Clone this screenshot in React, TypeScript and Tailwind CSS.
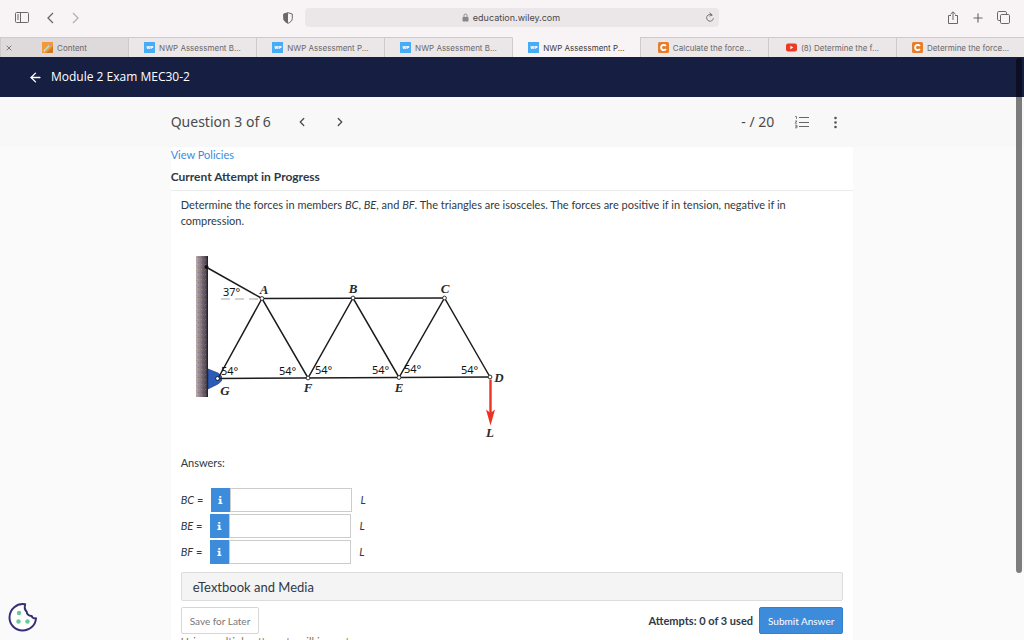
import { useState } from "react";
import type { ReactNode } from "react";
import { ArrowLeft, ChevronLeft, ChevronRight, Plus, X } from "lucide-react";

type TabIcon = "pencil" | "wp" | "youtube" | "chegg";

interface BrowserTab {
  id: number;
  title: string;
  icon: TabIcon;
  active?: boolean;
  hovered?: boolean;
}

const TABS: BrowserTab[] = [
  { id: 1, title: "Content", icon: "pencil", hovered: true },
  { id: 2, title: "NWP Assessment B...", icon: "wp" },
  { id: 3, title: "NWP Assessment P...", icon: "wp" },
  { id: 4, title: "NWP Assessment B...", icon: "wp" },
  { id: 5, title: "NWP Assessment P...", icon: "wp", active: true },
  { id: 6, title: "Calculate the force...", icon: "chegg" },
  { id: 7, title: "(8) Determine the f...", icon: "youtube" },
  { id: 8, title: "Determine the force...", icon: "chegg" },
];

const MEMBERS = ["BC", "BE", "BF"];

function Favicon({ icon }: { icon: TabIcon }) {
  switch (icon) {
    case "pencil":
      return (
        <svg width="11" height="11" viewBox="0 0 11 11" className="shrink-0">
          <rect width="11" height="11" fill="#ef9a3c" />
          <path d="M4 11 11 4v7z" fill="#cf7a22" />
          <path d="M3 8 7.4 3.4" stroke="#9be6e0" strokeWidth="1.8" />
          <path d="M7.4 3.4 8.8 2" stroke="#e583b4" strokeWidth="1.8" />
          <path d="M1.6 9.4 3.4 9 2 7.6z" fill="#fff" />
        </svg>
      );
    case "wp":
      return (
        <span className="flex h-[11px] w-[11px] shrink-0 items-center justify-center bg-[#48abf3] text-[4px] leading-none font-black text-white">
          WP
        </span>
      );
    case "youtube":
      return (
        <svg width="11" height="11" viewBox="0 0 11 11" className="shrink-0">
          <rect y="1.5" width="11" height="8" rx="2" fill="#ee3a24" />
          <path d="M4.3 3.8v3.4l3-1.7z" fill="#fff" />
        </svg>
      );
    case "chegg":
      return (
        <svg width="11" height="11" viewBox="0 0 11 11" className="shrink-0">
          <rect width="11" height="11" rx="1.5" fill="#e57f2d" />
          <path d="M7.9 4.1A2.6 2.6 0 1 0 7.9 6.9" fill="none" stroke="#fff" strokeWidth="1.9" />
        </svg>
      );
  }
}

function ToolButton({ label, children }: { label: string; children: ReactNode }) {
  return (
    <button type="button" aria-label={label} className="flex items-center justify-center">
      {children}
    </button>
  );
}

function BrowserToolbar() {
  return (
    <div className="flex h-[37px] items-center bg-[#f8f4f5] px-3.5 pb-0.5 text-[#6b6768]">
      <div className="flex flex-1 items-center">
        <ToolButton label="Show sidebar">
          <svg width="16" height="12" viewBox="0 0 16 12" fill="none" stroke="currentColor">
            <rect x="1.5" y="0.5" width="13" height="10" rx="1" />
            <path d="M6.5 .5v10M3 3h2M3 5h2M3 7h2" />
          </svg>
        </ToolButton>
        <div className="ml-3 flex items-center gap-1">
          <ToolButton label="Back">
            <svg width="20" height="14" viewBox="0 0 20 14" fill="none" stroke="currentColor" strokeWidth="1.3">
              <path d="M11 2 6 7l5 5" />
            </svg>
          </ToolButton>
          <ToolButton label="Forward">
            <svg width="20" height="14" viewBox="0 0 20 14" fill="none" stroke="#b3afb0" strokeWidth="1.3">
              <path d="M7 2l5 5-5 5" />
            </svg>
          </ToolButton>
        </div>
        <div className="mr-3 ml-auto">
          <ToolButton label="Privacy report">
            <svg width="10" height="12" viewBox="0 0 10 12">
              <path
                d="M5 .7 9.3 2v4.5c0 2.3-1.8 3.7-4.3 4.8C2.5 10.2 .7 8.8 .7 6.500V2z"
                fill="none"
                stroke="currentColor"
              />
              <path d="M5 .7v10.6C2.5 10.2 .7 8.8 .7 6.500V2z" fill="currentColor" />
            </svg>
          </ToolButton>
        </div>
      </div>

      <div className="flex h-[19px] w-[41.5%] items-center justify-center rounded bg-[#ebe7e8] pr-1">
        <div className="flex flex-1 items-center justify-center gap-1 pl-3">
          <svg width="7" height="9" viewBox="0 0 7 9">
            <rect x="0.5" y="4" width="6" height="4.5" rx="0.8" fill="#8b8788" />
            <path d="M2 4V2.5a1.5 1.5 0 0 1 3 0V4" fill="none" stroke="#8b8788" />
          </svg>
          <span className="text-[9px] leading-3 text-[#4a4748]">education.wiley.com</span>
        </div>
        <ToolButton label="Reload">
          <svg width="10" height="11" viewBox="0 0 10 11" fill="none" stroke="currentColor" strokeWidth="0.9">
            <path d="M7.2 3.2A3.4 3.4 0 1 0 8.4 6.2M4.6 .6l2.6 2.5-2.8 1" />
          </svg>
        </ToolButton>
      </div>

      <div className="flex flex-1 items-center justify-end gap-3">
        <ToolButton label="Share">
          <svg width="12" height="14" viewBox="0 0 12 14" fill="none" stroke="currentColor">
            <path d="M4 4.500H1.500v8h9v-8H8M6 9V1M3.500 3.200 6 .8l2.500 2.400" />
          </svg>
        </ToolButton>
        <ToolButton label="New tab">
          <Plus size={14} strokeWidth={2} />
        </ToolButton>
        <ToolButton label="Show all tabs">
          <svg width="13" height="13" viewBox="0 0 13 13" fill="none" stroke="currentColor">
            <rect x="3.5" y="3.5" width="9" height="9" rx="1.2" />
            <path d="M3.5 9.500h-1.700a1.300 1.300 0 0 1-1.300-1.300V1.800A1.300 1.300 0 0 1 1.800 .5h6.400a1.300 1.300 0 0 1 1.300 1.300v1.700" />
          </svg>
        </ToolButton>
      </div>
    </div>
  );
}

function TabBar() {
  return (
    <div className="flex h-5 bg-[#ebe7e8]">
      {TABS.map((tab) => (
        <button
          key={tab.id}
          type="button"
          className={`relative flex min-w-0 flex-1 items-center justify-center gap-1 border-t border-l text-[8px] leading-3 ${
            tab.active
              ? "border-t-[#f8f4f5] border-l-[#cfcbcc] bg-[#f8f4f5] text-[#3b3839]"
              : "border-t-[#cfcbcc] border-l-[#cfcbcc] text-[#6a6667]"
          } ${tab.hovered ? "bg-[#dedadb]" : ""}`}
        >
          {tab.hovered && <X size={8} strokeWidth={2.5} className="absolute left-1" />}
          <Favicon icon={tab.icon} />
          <span className="whitespace-nowrap">{tab.title}</span>
        </button>
      ))}
    </div>
  );
}

function QuestionBar() {
  return (
    <div className="bg-[#f8f8f8] font-['Noto_Sans','Open_Sans',sans-serif]">
      <div className="mx-auto flex h-[50px] w-2/3 items-center text-[#4b4b4b]">
        <h2 className="text-[14px] leading-5">Question 3 of 6</h2>
        <div className="ml-6 flex gap-6">
          <button type="button" aria-label="Previous question">
            <ChevronLeft size={14} strokeWidth={2.2} />
          </button>
          <button type="button" aria-label="Next question">
            <ChevronRight size={14} strokeWidth={2.2} />
          </button>
        </div>
        <span className="ml-auto text-[14px] leading-5">- / 20</span>
        <button type="button" aria-label="Question list" className="ml-5">
          <svg width="16" height="14" viewBox="0 0 16 14" fill="none" stroke="#666">
            <path d="M5 2.500h10M5 7.500h10M5 11.500h10" strokeWidth="1.2" />
            <path d="M1 1.500h1.500v2.500M1 6h2L1 8.200h2M1 10.200h2v2.600H1M1.500 11.500H3" strokeWidth="0.8" />
          </svg>
        </button>
        <button type="button" aria-label="More options" className="mr-3 ml-5">
          <svg width="11" height="14" viewBox="0 0 11 14" fill="#555">
            <circle cx="5.5" cy="3" r="1.300" />
            <circle cx="5.5" cy="7.5" r="1.300" />
            <circle cx="5.5" cy="12" r="1.300" />
          </svg>
        </button>
      </div>
    </div>
  );
}

function TrussFigure() {
  const joints = [
    [262, 298.5],
    [353, 298],
    [444.5, 298],
    [308, 378],
    [399, 377.5],
    [490, 377],
  ];
  const names: [string, number, number][] = [
    ["A", 264, 294],
    ["B", 353, 293],
    ["C", 445, 293],
    ["G", 225, 395],
    ["F", 308, 392],
    ["E", 399, 392],
    ["D", 499, 382],
    ["L", 490, 437],
  ];
  const angles: [string, number, number][] = [
    ["37", 223, 296],
    ["54", 221, 375],
    ["54", 279, 375],
    ["54", 315, 374],
    ["54", 372, 374],
    ["54", 404, 373],
    ["54", 461, 374],
  ];

  return (
    <svg width="330" height="200" viewBox="181 245 330 200" className="block">
      <defs>
        <linearGradient id="wall" x1="0" x2="1">
          <stop offset="0" stopColor="#b9adae" />
          <stop offset="0.45" stopColor="#82747c" />
          <stop offset="0.85" stopColor="#4b434c" />
          <stop offset="1" stopColor="#17151a" />
        </linearGradient>
        <pattern id="grain" width="4" height="5" patternUnits="userSpaceOnUse">
          <rect width="1" height="1" fill="#9a775f" opacity="0.35" />
          <rect x="2" y="2" width="1" height="1" fill="#3b3f73" opacity="0.35" />
          <rect x="1" y="4" width="1" height="1" fill="#d5cbd0" opacity="0.25" />
        </pattern>
      </defs>

      {/* wall and pin support */}
      <rect x="196" y="256" width="12" height="141" fill="url(#wall)" />
      <rect x="196" y="256" width="11" height="141" fill="url(#grain)" />
      <path d="M208 369 218 373 221.5 376V381L218 384 208 389z" fill="#2b5cb8" stroke="#1b2f66" strokeWidth="0.6" />

      <path d="M221 299h38" stroke="#a5a5a5" strokeWidth="1.2" strokeDasharray="9 5" />

      <g stroke="#1c1c1e" strokeWidth="1.5" fill="none">
        <path d="M206 267 262 298.5" />
        <path d="M262 298.5 444.5 298" />
        <path d="M218 378.5 490 377" />
        <path d="M218 378.5 262 298.5 308 378 353 298 399 377.5 444.5 298 490 377" />
      </g>
      <circle cx="206.5" cy="267" r="2" fill="#111" />
      <circle cx="217.5" cy="378.5" r="2" fill="#e8eefc" stroke="#142040" />
      {joints.map(([x, y]) => (
        <circle key={x} cx={x} cy={y} r="1.9" fill="#fff" stroke="#222" strokeWidth="0.9" />
      ))}

      {/* load at D */}
      <path d="M490.5 379.500v38" stroke="#ea3323" strokeWidth="2.4" />
      <path d="M486 409.500 490.500 413 495 409.500 490.500 425.500z" fill="#ea3323" />

      <g
        className="font-['Liberation_Serif',serif]"
        fontSize="13"
        fontStyle="italic"
        fontWeight="bold"
        fill="#2a2a2a"
        textAnchor="middle"
      >
        {names.map(([name, x, y]) => (
          <text key={name} x={x} y={y}>
            {name}
          </text>
        ))}
      </g>
      <g className="font-['Noto_Sans',sans-serif]" fontSize="11" fill="#111">
        {angles.map(([value, x, y]) => (
          <text key={x} x={x} y={y}>
            {value}°
          </text>
        ))}
      </g>
    </svg>
  );
}

function AnswerRow({ member }: { member: string }) {
  const [value, setValue] = useState("");
  const inputId = `answer-${member}`;

  return (
    <div className="flex items-center gap-2">
      <label htmlFor={inputId} className="text-[11px] leading-4">
        <em>{member}</em> =
      </label>
      <div className="flex h-6 w-[141px]">
        <button
          type="button"
          aria-label={`Information about ${member}`}
          className="flex w-[19px] shrink-0 items-center justify-center bg-[#3d8bdb] text-white"
        >
          <svg width="5" height="8" viewBox="0 0 5 8" fill="currentColor">
            <path d="M1.300 0h2v1.700h-2zM.5 2.700h2.900v4h1V8H.4V6.700h1V4H.5z" />
          </svg>
        </button>
        <input
          id={inputId}
          type="text"
          value={value}
          onChange={(e) => setValue(e.target.value)}
          className="min-w-0 flex-1 border border-[#ccc] bg-white px-2 text-[11px] outline-none"
        />
      </div>
      <em className="text-[11px] leading-4">L</em>
    </div>
  );
}

function CookieButton() {
  return (
    <button type="button" aria-label="Cookie settings" className="absolute bottom-2 left-2">
      <svg width="30" height="30" viewBox="0 0 30 30">
        <path
          d="M17.200 2.300C9 .8 1.500 7 1.500 15.500c0 7.500 6 13 13 13 7.200 0 13-5 13.500-12.200-2 .3-4-.8-4.300-2.300-2.800 .2-5-1.800-5-4.300-1.800-1.700-2.300-5-1.500-7.400z"
          fill="#fff"
          stroke="#352f79"
          strokeWidth="2"
          strokeLinejoin="round"
        />
        <g fill="#68c99a">
          <circle cx="11" cy="11" r="2.200" />
          <circle cx="10.5" cy="19.5" r="2.200" />
          <circle cx="19.5" cy="19.5" r="2.200" />
        </g>
      </svg>
    </button>
  );
}

export default function App() {
  return (
    <div className="relative flex h-screen flex-col overflow-hidden bg-[#fafafa] font-['Lato',sans-serif] text-[#2f3a45]">
      {/* BROWSER CHROME */}
      <div className="shrink-0 font-['Inter',sans-serif]">
        <BrowserToolbar />
        <TabBar />
      </div>

      {/* HEADER */}
      <header className="flex h-10 shrink-0 items-center gap-2 bg-[#161f42] px-7 font-['Open_Sans','Noto_Sans',sans-serif] text-white">
        <a href="#course" aria-label="Back to course">
          <ArrowLeft size={15} strokeWidth={2.2} />
        </a>
        <h1 className="text-[12px] leading-4 font-medium">Module 2 Exam MEC30-2</h1>
      </header>

      <div className="shrink-0">
        <QuestionBar />
      </div>

      {/* QUESTION */}
      <main className="mx-auto min-h-0 w-2/3 flex-1 bg-white">
        <div className="border-b border-[#ececec] pb-[5px]">
          <a href="#policies" className="block text-[11px] leading-4 text-[#3d8bdb]">
            View Policies
          </a>
          <h3 className="mt-1.5 text-[12px] leading-4 font-bold">Current Attempt in Progress</h3>
        </div>

        <div className="px-2.5 pt-1.5">
          <p className="pr-5 text-[11px] leading-4">
            Determine the forces in members <em>BC</em>, <em>BE</em>, and <em>BF</em>. The triangles
            are isosceles. The forces are positive if in tension, negative if in compression.
          </p>
          <div className="mt-4">
            <TrussFigure />
          </div>

          <p className="mt-2.5 text-[11px] leading-4">Answers:</p>
          <div className="mt-[17px] flex flex-col gap-0.5">
            {MEMBERS.map((member) => (
              <AnswerRow key={member} member={member} />
            ))}
          </div>

          <button
            type="button"
            className="mt-2 block h-[29px] w-full rounded-xs border border-[#dcdcdc] bg-[#f4f4f4] px-[11px] text-left text-[13px] leading-4"
          >
            eTextbook and Media
          </button>

          <div className="mt-1.5 flex items-center">
            <button
              type="button"
              className="h-[27px] rounded-xs border border-[#d6d6d6] bg-white px-2 text-[10px] leading-4 text-[#777]"
            >
              Save for Later
            </button>
            <span className="mr-1.5 ml-auto text-[11px] leading-4 font-bold">
              Attempts: 0 of 3 used
            </span>
            <button
              type="button"
              className="h-[27px] rounded-xs border border-[#357fca] bg-[#3d8bdb] px-2 text-[10px] leading-4 text-white"
            >
              Submit Answer
            </button>
          </div>
          <p className="text-[11px] leading-4 text-[#8a7434]">
            Using multiple attempts will impact your score.
          </p>
        </div>
      </main>

      <CookieButton />
      <div className="absolute top-[58px] right-0.5 h-[515px] w-1.5 rounded-full bg-black/50" />
    </div>
  );
}
